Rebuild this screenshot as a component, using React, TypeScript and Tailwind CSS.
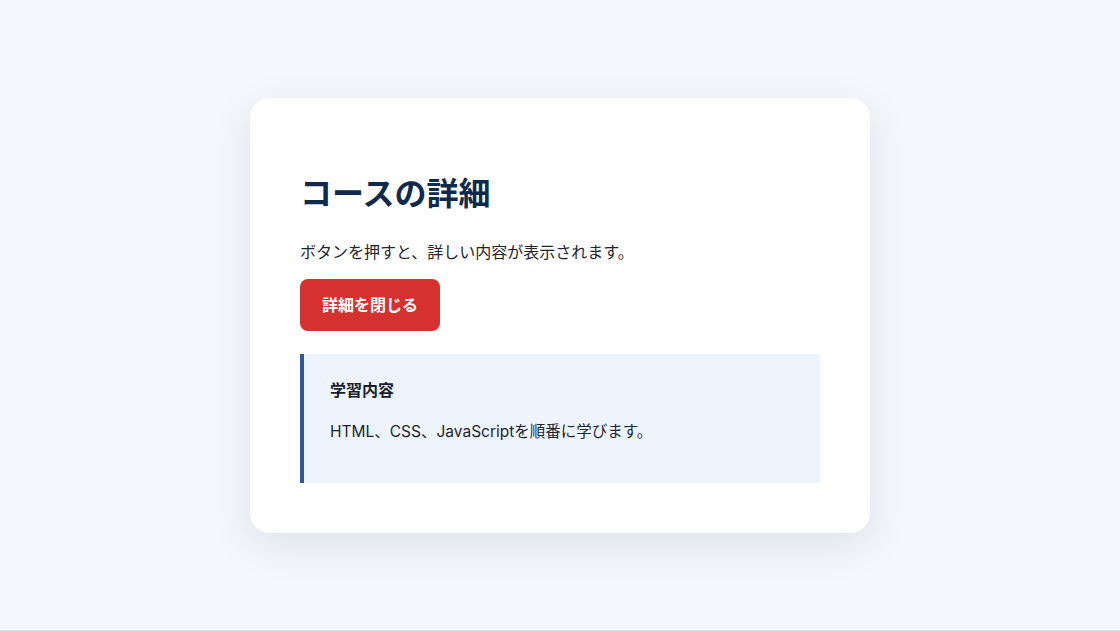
export default function App() {
  return (
    <div className="h-[631px] w-full bg-[#f4f7fb] border-b border-[#dce5ee] flex items-center justify-center font-['Inter','Noto_Sans_CJK_JP',sans-serif]">
      <div className="w-[620px] bg-white rounded-[20px] p-[50px] shadow-[0_12px_40px_rgba(30,50,90,0.10)]">
        <h1 className="text-[32px] leading-[48px] font-bold text-[#102a4e] mt-[22px] mb-[22px]">コースの詳細</h1>
        <p className="text-[16px] leading-[24px] text-[#1f2430] mb-[15px]">ボタンを押すと、詳しい内容が表示されます。</p>
        <button className="h-[52px] px-[22px] rounded-[8px] bg-[#d63031] text-white text-[16px] font-bold">
          詳細を閉じる
        </button>
        <div className="mt-[23px] bg-[#edf4fd] border-l-4 border-[#2a5a9b] pl-[26px] pr-6 pt-6 pb-[39px]">
          <p className="text-[16px] leading-[24px] font-bold text-[#1a1f2b]">学習内容</p>
          <p className="mt-[18px] text-[15.5px] leading-[24px] text-[#1f2430]">HTML、CSS、JavaScriptを順番に学びます。</p>
        </div>
      </div>
    </div>
  );
}
